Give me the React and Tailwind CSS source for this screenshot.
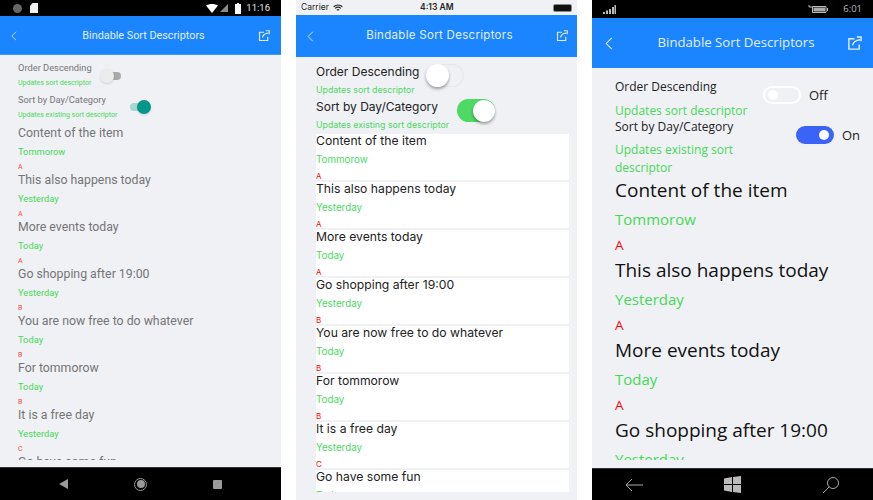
import React from 'react';

const items = [
  ['Content of the item', 'Tommorow', 'A'],
  ['This also happens today', 'Yesterday', 'A'],
  ['More events today', 'Today', 'A'],
  ['Go shopping after 19:00', 'Yesterday', 'B'],
  ['You are now free to do whatever', 'Today', 'B'],
  ['For tommorow', 'Today', 'B'],
  ['It is a free day', 'Yesterday', 'C'],
  ['Go have some fun', 'Today', 'C'],
];

const winItems = [
  ['Content of the item', 'Tommorow', 'A'],
  ['This also happens today', 'Yesterday', 'A'],
  ['More events today', 'Today', 'A'],
  ['Go shopping after 19:00', 'Yesterday', 'B'],
];

const Back = ({ className }) => (
  <svg viewBox="0 0 10 16" className={className} fill="none" stroke="currentColor" strokeWidth="1.3">
    <path d="M8.5 1 1.5 8l7 7" />
  </svg>
);

const ShareIcon = ({ className }) => (
  <svg viewBox="0 0 16 16" className={className} fill="none" stroke="currentColor" strokeWidth="1.5">
    <path d="M8 3H2v11h11V9" />
    <path d="M6 10c.5-3 3-5.5 8-6M10.500 1H15v4.500" />
  </svg>
);

const AndroidPhone = () => (
  <div className="w-[281px] h-[500px] flex flex-col bg-[#f0f1f5] font-['Roboto',sans-serif]">
    <div className="h-4 bg-black flex items-center pl-[13px] pr-[11px] shrink-0">
      <div className="w-[9px] h-[9px] rounded-full bg-[#666]" />
      <svg viewBox="0 0 8 10" className="w-2 h-2.5 ml-[8px]" fill="#f2f2f2"><path d="M2.500 0H8v10H0V3z" /></svg>
      <div className="flex-1" />
      <svg viewBox="0 0 12 9" className="w-3 h-[9px]" fill="#fff"><path d="M0 1.500C3.500-.5 8.500-.5 12 1.500L6 9z" /></svg>
      <svg viewBox="0 0 8 8" className="w-2 h-2 ml-[2px]" fill="#8a8a8a"><path d="M8 0v8H0z" /></svg>
      <svg viewBox="0 0 6 11" className="w-1.5 h-[11px] ml-[7px]" fill="#fff"><path d="M2 0h2v1h2v10H0V1h2z" /></svg>
      <span className="text-[9.500px] leading-none text-[#e6e6e6] ml-[5px]">11:16</span>
    </div>
    <div className="h-[39px] bg-[#1a85ff] border-b border-[#3d97fb] pt-[2px] flex items-center justify-between px-[11px] text-[#e3effd] shrink-0">
      <Back className="w-[6px] h-[10px]" />
      <span className="text-[10.800px] ml-[12px]">Bindable Sort Descriptors</span>
      <ShareIcon className="w-[12px] h-[12px]" />
    </div>
    <div className="flex-1 min-h-0 overflow-hidden pl-[18px] pt-[6px] mb-[7px]">
      <div className="h-[32px] flex">
        <div className="w-[81px]">
          <p className="text-[9.300px] leading-[14px] text-[#757575] whitespace-nowrap">Order Descending</p>
          <p className="text-[7px] leading-[16px] text-[#45d957] whitespace-nowrap">Updates sort descriptor</p>
        </div>
        <div className="relative w-[21px] h-[8px] mt-[11px] ml-[1px]">
          <div className="absolute left-[5px] top-0 w-[16px] h-[8px] rounded-full bg-[#a9a9a9]" />
          <div className="absolute left-0 -top-[3px] w-[14px] h-[14px] rounded-full bg-[#ececec] shadow" />
        </div>
      </div>
      <div className="h-[29px] flex">
        <div className="w-[111px]">
          <p className="text-[9.300px] leading-[14px] text-[#757575] whitespace-nowrap">Sort by Day/Category</p>
          <p className="text-[7px] leading-[16px] text-[#45d957] whitespace-nowrap">Updates existing sort descriptor</p>
        </div>
        <div className="relative w-[21px] h-[8px] mt-[10px] ml-[1px]">
          <div className="absolute left-0 top-0 w-[16px] h-[8px] rounded-full bg-[#a3d8d3]" />
          <div className="absolute left-[7px] -top-[3px] w-[14px] h-[14px] rounded-full bg-[#009688] shadow" />
        </div>
      </div>
      {items.map(([title, day, group]) => (
        <div key={title} className="h-[47px]">
          <p className="text-[12.300px] leading-[22px] text-[#757575] whitespace-nowrap">{title}</p>
          <p className="text-[9.300px] leading-[15px] text-[#45d957]">{day}</p>
          <p className="text-[7px] leading-[10px] mt-[3px] text-[#f44]">{group}</p>
        </div>
      ))}
    </div>
    <div className="h-[33px] bg-black border-t border-[#333] flex items-center justify-between px-[59px] shrink-0">
      <svg viewBox="0 0 9 10" className="w-[9px] h-[10px]" fill="#9a9a9a"><path d="M9 0v10L0 5z" /></svg>
      <div className="w-[13px] h-[13px] rounded-full border border-[#9a9a9a] p-[1.500px]">
        <div className="w-full h-full rounded-full bg-[#9a9a9a]" />
      </div>
      <div className="w-[9px] h-[9px] bg-[#9a9a9a] rounded-[1px]" />
    </div>
  </div>
);

const IosPhone = () => (
  <div className="w-[281px] h-[500px] flex flex-col bg-[#f0f1f5] font-['Inter',sans-serif]">
    <div className="relative h-[15px] flex items-center justify-between px-[5px] text-[#222] shrink-0">
      <div className="flex items-center gap-[4px]">
        <span className="text-[8.500px] leading-none">Carrier</span>
        <svg viewBox="0 0 12 9" className="w-[10px] h-[8px]" fill="none" stroke="#222" strokeWidth="1.3">
          <path d="M.7 3c3-2.700 7.600-2.700 10.600 0M2.500 5c2-1.700 5-1.700 7 0" />
          <path d="M4.500 7c1-.7 2-.7 3 0" />
        </svg>
      </div>
      <span className="absolute left-[124px] text-[8.500px] leading-none font-semibold">4:13 AM</span>
      <div className="w-[19px] h-[8px] rounded-[2px] bg-[#111] border border-[#888]" />
    </div>
    <div className="h-[42px] bg-[#1a85ff] flex items-center justify-between pl-[11px] pr-[9px] text-[#e3effd] shrink-0">
      <Back className="w-[7px] h-[11px]" />
      <span className="text-[11.500px] tracking-[0.3px] ml-[9px]">Bindable Sort Descriptors</span>
      <ShareIcon className="w-[12px] h-[12px]" />
    </div>
    <div className="flex-1 min-h-0 overflow-hidden ml-[20px] mr-[8px] mt-[7px] mb-[8px]">
      <div className="h-[35px] flex">
        <div className="w-[110px]">
          <p className="text-[12px] leading-[16px] text-[#222] whitespace-nowrap">Order Descending</p>
          <p className="text-[8.800px] leading-[20px] text-[#4cd964] whitespace-nowrap">Updates sort descriptor</p>
        </div>
        <div className="w-[38px] h-[23px] rounded-full border border-[#e6e6e9] bg-[#f0f1f5] relative">
          <div className="absolute -left-[1px] -top-[1px] w-[23px] h-[23px] rounded-full bg-white shadow-[0_2px_3px_rgba(0,0,0,0.35)]" />
        </div>
      </div>
      <div className="h-[35px] flex">
        <div className="w-[141px]">
          <p className="text-[12px] leading-[16px] text-[#222] whitespace-nowrap">Sort by Day/Category</p>
          <p className="text-[8.800px] leading-[20px] text-[#4cd964] whitespace-nowrap">Updates existing sort descriptor</p>
        </div>
        <div className="w-[38px] h-[23px] rounded-full bg-[#4cd964] relative">
          <div className="absolute right-0 top-[1px] w-[22px] h-[22px] rounded-full bg-white shadow-[0_2px_3px_rgba(0,0,0,0.35)]" />
        </div>
      </div>
      <div className="flex flex-col gap-[2px]">
        {items.map(([title, day, group]) => (
          <div key={title} className="h-[46px] bg-white overflow-hidden">
            <p className="text-[12.200px] leading-[14px] text-[#222] whitespace-nowrap">{title}</p>
            <p className="text-[9.800px] leading-[12px] mt-[6px] text-[#4cd964]">{day}</p>
            <p className="text-[8px] leading-[9px] mt-[6px] text-[#f00]">{group}</p>
          </div>
        ))}
      </div>
    </div>
  </div>
);

const WinPhone = () => (
  <div className="w-[281px] h-[500px] flex flex-col bg-[#f0f1f5] font-['Open_Sans',sans-serif]">
    <div className="h-[18px] bg-black flex items-center pl-[11px] pr-[11px] shrink-0 text-[#bbb]">
      <svg viewBox="0 0 13 9" className="w-[13px] h-[9px]" fill="#bbb">
        <path d="M0 7h2v2H0zM3 5.500h2V9H3zM6 4h2v5H6zM9 2h2v7H9zM11.500 0H13v9h-1.500z" />
      </svg>
      <div className="flex-1" />
      <svg viewBox="0 0 20 10" className="w-5 h-2.5 mr-[15px]" fill="none" stroke="#bbb">
        <path d="M4.500 2.500H18v6H4.500zM19.500 4v3M1 1v2h3" />
        <path d="M5.500 3.500H17v4H5.500z" fill="#aaa" stroke="none" />
      </svg>
      <span className="text-[9.500px] leading-none">6:01</span>
    </div>
    <div className="h-[50px] bg-[#1a85ff] flex items-center justify-between pl-[13px] pr-[11px] text-[#e3effd] shrink-0">
      <Back className="w-[8px] h-[13px]" />
      <span className="text-[13.200px] ml-[12px]">Bindable Sort Descriptors</span>
      <ShareIcon className="w-[15px] h-[15px]" />
    </div>
    <div className="flex-1 min-h-0 overflow-hidden pl-[23px] pt-[9px] mb-[8px]">
      <div className="h-[40px] flex">
        <div className="w-[148px]">
          <p className="text-[12px] leading-[20px] text-[#222] whitespace-nowrap">Order Descending</p>
          <p className="text-[12px] leading-[20px] mt-[4px] text-[#45d957] whitespace-nowrap">Updates sort descriptor</p>
        </div>
        <div className="w-[38px] h-[18px] mt-[9px] rounded-full border-2 border-white relative shrink-0">
          <div className="absolute left-[3px] top-[2px] w-[10px] h-[10px] rounded-full bg-white" />
        </div>
        <span className="text-[13px] leading-[18px] mt-[9px] ml-[8px] text-[#222]">Off</span>
      </div>
      <div className="h-[60px] flex">
        <div className="w-[181px] shrink-0">
          <p className="text-[12px] leading-[20px] text-[#222] whitespace-nowrap">Sort by Day/Category</p>
          <p className="text-[12px] leading-[18px] mt-[4px] text-[#45d957] w-[160px]">Updates existing sort descriptor</p>
        </div>
        <div className="w-[38px] h-[18px] mt-[9px] rounded-full bg-[#3b63f8] relative shrink-0">
          <div className="absolute right-[5px] top-[4px] w-[10px] h-[10px] rounded-full bg-white" />
        </div>
        <span className="text-[13px] leading-[18px] mt-[9px] ml-[8px] text-[#222]">On</span>
      </div>
      {winItems.map(([title, day, group]) => (
        <div key={title} className="h-[80px]">
          <p className="text-[19px] leading-[26px] text-[#111] whitespace-nowrap">{title}</p>
          <p className="text-[15px] leading-[22px] mt-[5px] text-[#45d957]">{day}</p>
          <p className="text-[13.500px] leading-[18px] mt-[6px] text-[#f00]">{group}</p>
        </div>
      ))}
    </div>
    <div className="h-[32px] bg-black border-t border-[#333] flex items-center justify-between pl-[33px] pr-[33px] shrink-0">
      <svg viewBox="0 0 18 14" className="w-[18px] h-[14px]" fill="none" stroke="#aaa" strokeWidth="1"><path d="M18 7H1M7 1 1 7l6 6" /></svg>
      <svg viewBox="0 0 17 17" className="w-[17px] h-[17px]" fill="#bbb"><path d="M0 2.500 8 1v7H0zM9 1l8-1v8H9zM0 9h8v7l-8-1.500zM9 9h8v8l-8-1z" /></svg>
      <svg viewBox="0 0 18 18" className="w-[18px] h-[18px]" fill="none" stroke="#aaa" strokeWidth="1"><circle cx="11" cy="7" r="5.500" /><path d="M7 11 1 17" /></svg>
    </div>
  </div>
);

export default function App() {
  return (
    <div className="w-[873px] h-[500px] bg-white flex gap-[15px] overflow-hidden">
      <AndroidPhone />
      <IosPhone />
      <WinPhone />
    </div>
  );
}
